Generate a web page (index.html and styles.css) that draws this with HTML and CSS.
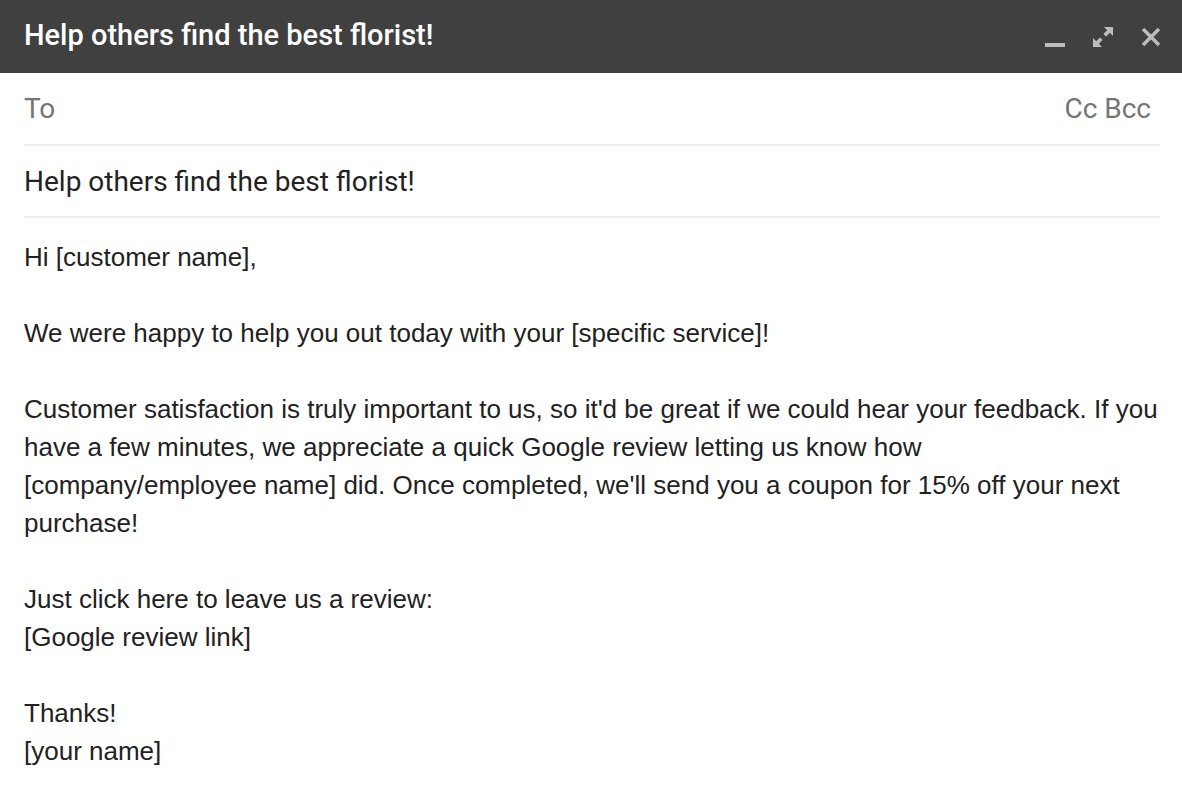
FILE: index.html
```html
<!DOCTYPE html>
<html lang="en">
<head>
  <meta charset="UTF-8">
  <title>Help others find the best florist!</title>
  <meta name="viewport" content="width=device-width, initial-scale=1.0">
  <link rel="stylesheet" href="styles.css">
</head>
<body>
  <div class="compose">
    <div class="titlebar">
      <span class="title">Help others find the best florist!</span>
      <div class="actions">
        <svg class="icon" viewBox="0 0 20 20" width="20" height="20">
          <rect x="0" y="16" width="20" height="4" fill="currentColor"/>
        </svg>
        <svg class="icon" viewBox="0 0 20 20" width="20" height="20">
          <path d="M11 0h9v9l-3.2-3.2-3.8 3.8-2.6-2.6 3.8-3.8z M9 20H0v-9l3.2 3.2 3.8-3.8 2.6 2.6-3.8 3.8z" fill="currentColor"/>
        </svg>
        <svg class="icon" viewBox="0 0 20 20" width="20" height="20">
          <path d="M2 2L18 18M18 2L2 18" stroke="currentColor" stroke-width="3.4" fill="none"/>
        </svg>
      </div>
    </div>

    <div class="field to-row">
      <span class="muted">To</span>
      <span class="muted">Cc Bcc</span>
    </div>
    <div class="field subject">Help others find the best florist!</div>

    <div class="body">
      <p>Hi [customer name],</p>
      <p>We were happy to help you out today with your [specific service]!</p>
      <p>Customer satisfaction is truly important to us, so it'd be great if we could hear your feedback. If you have a few minutes, we appreciate a quick Google review letting us know how [company/employee name] did. Once completed, we'll send you a coupon for 15% off your next purchase!</p>
      <p>Just click here to leave us a review:<br>[Google review link]</p>
      <p>Thanks!<br>[your name]</p>
    </div>
  </div>
</body>
</html>
```

FILE: styles.css
```css
body {
  margin: 0;
  background: #fff;
}

.compose {
  width: 1182px;
}

.titlebar {
  background: #404040;
  height: 73px;
  display: flex;
  align-items: center;
  justify-content: space-between;
  padding: 0 21px 0 24px;
}

.title {
  font-family: Roboto, "Liberation Sans", sans-serif;
  font-weight: 500;
  font-size: 29px;
  color: #fff;
  padding-bottom: 4px;
}

.actions {
  display: flex;
  gap: 28px;
  color: #bdbdbd;
  padding-top: 1px;
}

.field {
  margin: 0 22px 0 24px;
  border-bottom: 2px solid #eeeeee;
  font-family: Roboto, "Liberation Sans", sans-serif;
  font-size: 28px;
  height: 72px;
  display: flex;
  align-items: center;
  box-sizing: border-box;
}

.to-row {
  height: 73px;
  justify-content: space-between;
  padding-right: 9px;
}

.muted {
  color: #757575;
}

.subject {
  color: #222;
}

.body {
  margin: 0 22px 0 24px;
  padding-top: 20px;
  font-family: "Liberation Sans", Arial, sans-serif;
  font-size: 26px;
  line-height: 38px;
  color: #222;
}

.body p {
  margin: 0 0 38px;
}
```
